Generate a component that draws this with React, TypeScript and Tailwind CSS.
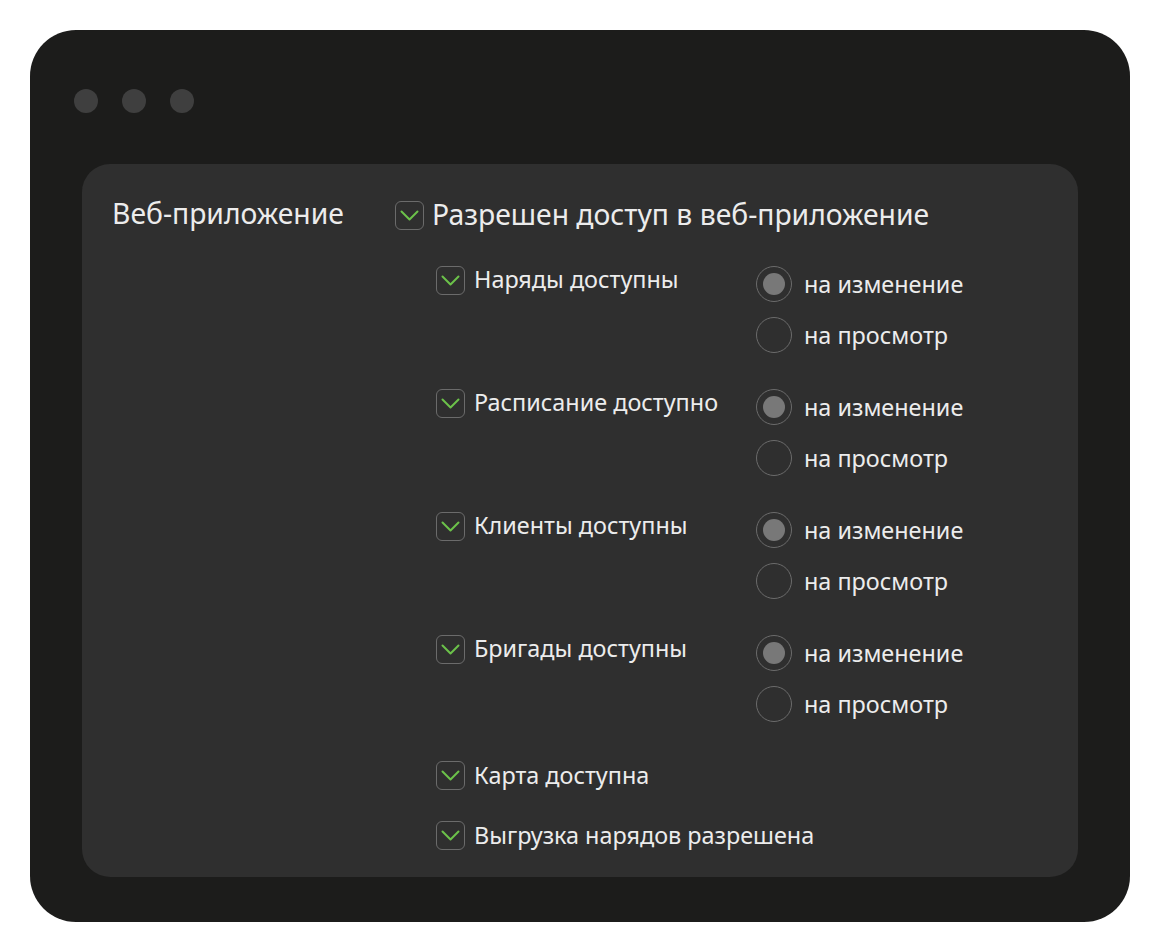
import React from "react";

const Check = () => (
  <div className="w-[29px] h-[29px] shrink-0 rounded-[6px] border-[1.5px] border-[#6b6b6b] flex items-center justify-center">
    <svg width="19" height="11" viewBox="0 0 19 11" fill="none">
      <path d="M1.5 1.5 L9.5 9.5 L17.5 1.5" stroke="#6cc24a" strokeWidth="2" strokeLinecap="round" strokeLinejoin="round" />
    </svg>
  </div>
);

const Radio = ({ on }: { on?: boolean }) => (
  <div className="w-[36px] h-[36px] shrink-0 rounded-full border-[1.5px] border-[#6b6b6b] flex items-center justify-center">
    {on && <div className="w-[22px] h-[22px] rounded-full bg-[#787878]" />}
  </div>
);

const groups = ["Наряды доступны", "Расписание доступно", "Клиенты доступны", "Бригады доступны"];

export default function App() {
  return (
    <div className="w-[1160px] h-[952px] bg-white pt-[30px] pl-[30px]" style={{ fontFamily: '"Noto Sans", "Open Sans", sans-serif' }}>
      <div className="w-[1100px] h-[892px] rounded-[46px] bg-[#1c1c1b] pt-[59px] px-[52px]">
        <div className="flex gap-[24px] ml-[-8px]">
          <div className="w-[24px] h-[24px] rounded-full bg-[#3f3f3f]" />
          <div className="w-[24px] h-[24px] rounded-full bg-[#3f3f3f]" />
          <div className="w-[24px] h-[24px] rounded-full bg-[#3f3f3f]" />
        </div>
        <div className="mt-[51px] rounded-[28px] bg-[#2f2f2f] h-[713px] pl-[30px] pt-[37px] text-[#ececec]">
          <div className="flex">
            <div className="w-[283px] text-[28.3px] leading-[29px] -mt-[2px]">Веб-приложение</div>
            <div>
              <div className="flex items-center gap-[8px]">
                <Check />
                <span className="text-[28.3px] leading-[29px] -mt-[2px]">Разрешен доступ в веб-приложение</span>
              </div>
              <div className="ml-[41px] mt-[36px] flex flex-col">
                {groups.map((g, i) => (
                  <div key={g} className={`flex ${i > 0 ? "mt-[36px]" : ""}`}>
                    <div className="w-[320px] flex items-center gap-[9px] h-[29px]">
                      <Check />
                      <span className="text-[23.4px] leading-[29px] -mt-[3px]">{g}</span>
                    </div>
                    <div className="flex flex-col gap-[15px]">
                      <div className="flex items-center gap-[12px]">
                        <Radio on />
                        <span className="text-[23.4px] leading-[29px]">на изменение</span>
                      </div>
                      <div className="flex items-center gap-[12px]">
                        <Radio />
                        <span className="text-[23.4px] leading-[29px]">на просмотр</span>
                      </div>
                    </div>
                  </div>
                ))}
                <div className="flex items-center gap-[9px] mt-[39px]">
                  <Check />
                  <span className="text-[23.4px] leading-[29px]">Карта доступна</span>
                </div>
                <div className="flex items-center gap-[9px] mt-[31px]">
                  <Check />
                  <span className="text-[23.4px] leading-[29px]">Выгрузка нарядов разрешена</span>
                </div>
              </div>
            </div>
          </div>
        </div>
      </div>
    </div>
  );
}
